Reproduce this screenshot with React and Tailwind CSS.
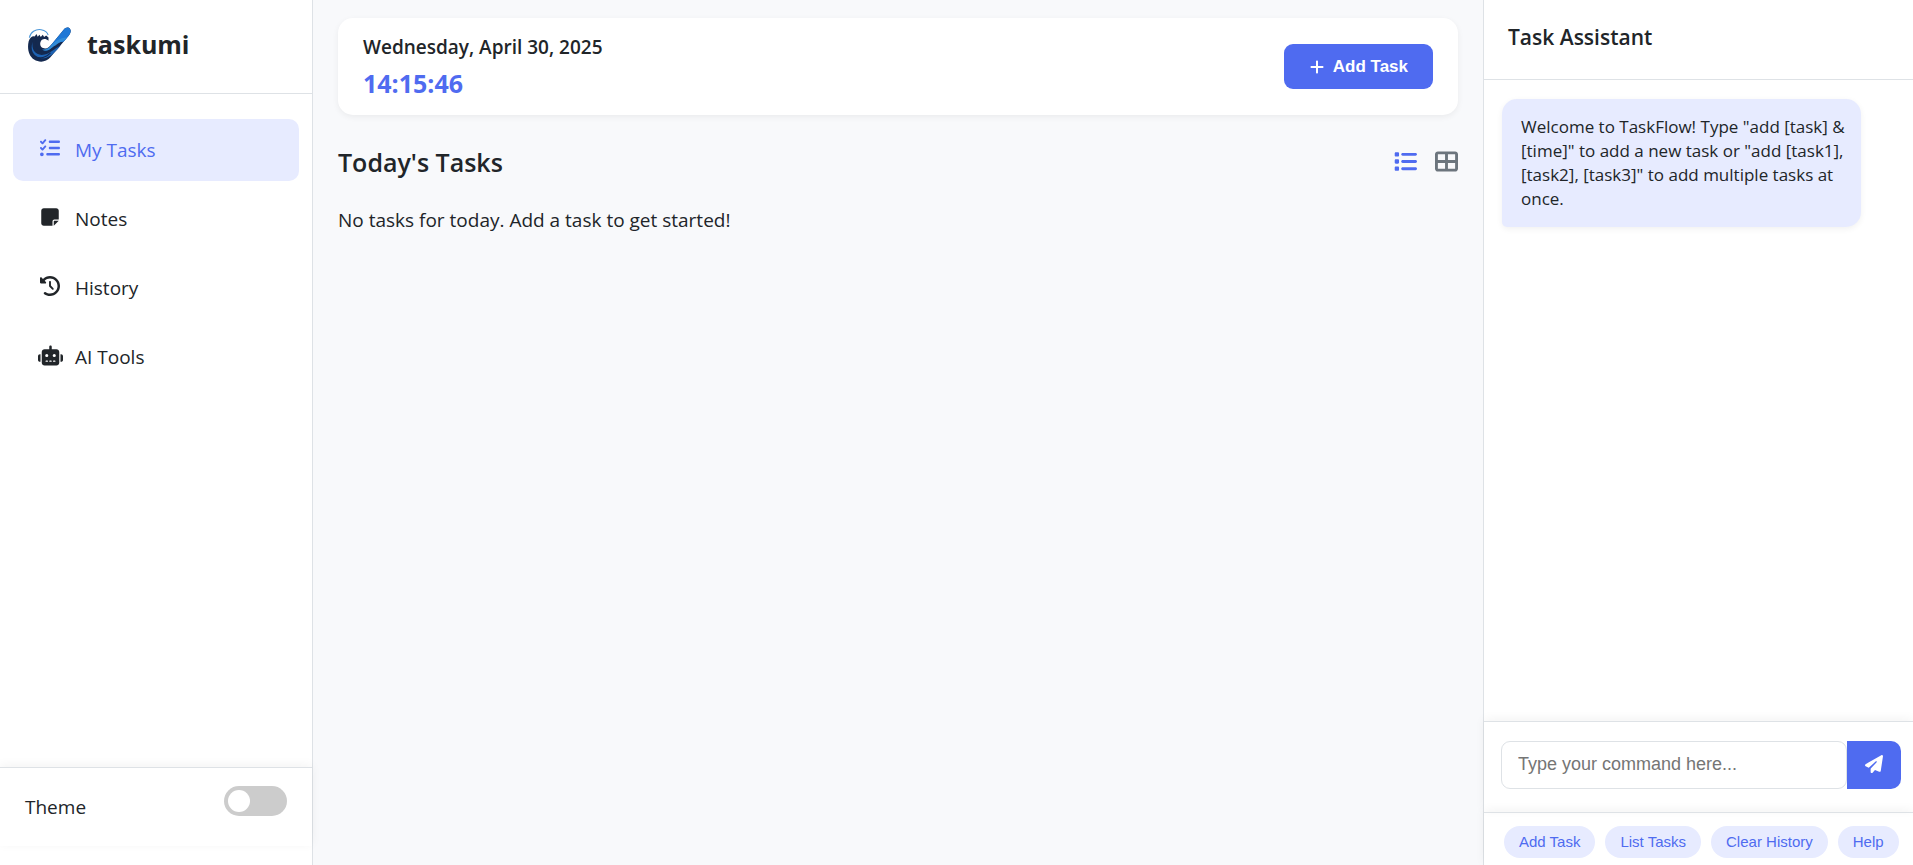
import { FaListCheck, FaNoteSticky, FaClockRotateLeft, FaRobot, FaPlus, FaList, FaTableCellsLarge, FaPaperPlane } from "react-icons/fa6";

const navItems = [
  { label: "My Tasks", Icon: FaListCheck, active: true },
  { label: "Notes", Icon: FaNoteSticky },
  { label: "History", Icon: FaClockRotateLeft },
  { label: "AI Tools", Icon: FaRobot },
];

const quickCommands = ["Add Task", "List Tasks", "Clear History", "Help"];

function Logo() {
  return (
    <svg viewBox="84 78 128 104" className="h-[35px] w-[43px] shrink-0" aria-hidden="true">
      <path d="M88 110 C91 92 107 84 123 86 C134 88 142 94 144 102" fill="none" stroke="#4a96d8" strokeWidth="3" />
      <path
        d="M86 120 C90 109 97 104 104 106 L109 99 L113 107 L118 101 L122 108 L128 101 L132 108 L138 103 L145 109 L145 119 C136 110 124 113 121 123 C118 134 125 142 135 142 C143 142 150 135 157 126 L190 86 C196 78 206 77 210 85 C213 92 209 99 205 104 L150 169 C138 183 118 185 102 175 C86 164 81 142 86 120 Z"
        fill="#14294f"
      />
      <path d="M146 140 L190 86 C196 78 206 77 210 85 C213 92 209 99 205 104 L190 122 C174 123 158 130 146 140 Z" fill="#1f78d6" />
      <path d="M200 109 C178 110 163 121 151 135 C144 142 135 146 126 144 C134 152 147 149 157 140 C168 129 180 121 194 117 Z" fill="#318cd8" />
      <path d="M98 122 C93 146 108 166 134 160 C150 156 162 143 182 132 L172 144 C158 160 142 172 124 171 C100 167 89 146 98 122 Z" fill="#1d62b2" />
      <path d="M109 119 C105 140 118 156 138 152 C148 149 156 142 164 135" fill="none" stroke="#14294f" strokeWidth="3" />
      <path d="M104 165 C120 174 138 168 151 155" fill="none" stroke="#14294f" strokeWidth="3" />
    </svg>
  );
}

function Sidebar() {
  return (
    <aside className="flex w-[313px] shrink-0 flex-col border-r border-[#dee2e6] bg-white">
      <div className="flex h-[94px] items-center gap-4 border-b border-[#dee2e6] pb-1 pl-7">
        <Logo />
        <span className="text-[25px] font-bold">taskumi</span>
      </div>
      <nav className="flex flex-1 flex-col gap-[7px] px-[13px] pt-[25px]">
        {navItems.map(({ label, Icon, active }) => (
          <a
            key={label}
            href="#"
            className={
              active
                ? "flex h-[62px] items-center gap-3 rounded-[10px] bg-[#e7ebff] px-6 text-[#4f6bf0]"
                : "flex h-[62px] items-center gap-3 rounded-[10px] px-6"
            }
          >
            <span className="flex w-[26px] justify-center pb-1">
              <Icon className={label === "AI Tools" ? "size-[25px]" : "size-5"} />
            </span>
            <span>{label}</span>
          </a>
        ))}
      </nav>
      <div className="mb-[19px] flex h-[79px] items-start justify-between border-t border-[#dee2e6] px-[25px] pt-[18px] shadow-[0_-2px_10px_rgba(0,0,0,0.05)]">
        <label htmlFor="theme" className="pt-[7px]">Theme</label>
        <span className="relative flex h-[30px] w-[63px] items-center rounded-full bg-[#ccc] px-1">
          <span className="size-[22px] rounded-full bg-white" />
          <input id="theme" type="checkbox" role="switch" className="absolute inset-0 size-full cursor-pointer opacity-0" />
        </span>
      </div>
    </aside>
  );
}

function TaskBoard() {
  return (
    <main className="min-w-0 flex-1 px-[25px] pt-[18px]">
      <header className="flex h-[97px] items-center justify-between rounded-[15px] bg-white px-[25px] shadow-[0_2px_6px_rgba(0,0,0,0.06)]">
        <div className="pt-px">
          <div className="text-[19px] font-semibold leading-8">Wednesday, April 30, 2025</div>
          <div className="text-[25px] font-bold leading-10 text-[#4f6bf0]">14:15:46</div>
        </div>
        <button className="flex h-[45px] items-center gap-2 rounded-[9px] bg-[#4f6bf0] px-[25px] font-['Liberation_Sans',Arial,sans-serif] text-[17px] font-bold text-white">
          <FaPlus className="size-4" />
          Add Task
        </button>
      </header>
      <div className="mt-[27px] flex items-center justify-between">
        <h1 className="text-[25px] font-semibold leading-10">Today's Tasks</h1>
        <div className="flex gap-[18px] pb-[2px]">
          <button aria-label="List view" className="text-[#4f6bf0]"><FaList className="size-[23px]" /></button>
          <button aria-label="Grid view" className="text-[#6c757d]"><FaTableCellsLarge className="size-[23px]" /></button>
        </div>
      </div>
      <p className="mt-[22px] leading-8">No tasks for today. Add a task to get started!</p>
    </main>
  );
}

function Assistant() {
  return (
    <aside className="flex w-[430px] shrink-0 flex-col border-l border-[#dee2e6] bg-white">
      <h2 className="h-20 border-b border-[#dee2e6] pl-6 pt-[21px] text-[21px] font-semibold leading-8">Task Assistant</h2>
      <div className="flex-1 px-[18px] pt-[19px]">
        <div className="w-[359px] rounded-[15px] rounded-bl-[5px] bg-[#e7ebff] py-4 pl-[19px] pr-3 text-[17px] leading-[24px] shadow-[0_2px_6px_rgba(0,0,0,0.06)]">
          Welcome to TaskFlow! Type "add [task] &amp; [time]" to add a new task or "add [task1], [task2], [task3]" to add multiple tasks at once.
        </div>
      </div>
      <form
        className="flex h-[91px] border-t border-[#dee2e6] pl-[17px] pr-3 pt-[19px] shadow-[0_-2px_10px_rgba(0,0,0,0.05)]"
        onSubmit={(e) => e.preventDefault()}
      >
        <input
          type="text"
          aria-label="Command"
          placeholder="Type your command here..."
          className="h-12 min-w-0 flex-1 rounded-[9px] border border-[#dee2e6] px-4 pb-[2px] font-['Liberation_Sans',Arial,sans-serif] text-lg outline-none placeholder:text-[#757575]"
        />
        <button aria-label="Send" className="flex h-12 w-[54px] items-center justify-center rounded-r-[10px] bg-[#4f6bf0] pb-[2px] text-white">
          <FaPaperPlane className="size-[18px]" />
        </button>
      </form>
      <div className="flex h-[53px] gap-[10px] border-t border-[#dee2e6] pl-5 pt-[13px] font-['Liberation_Sans',Arial,sans-serif] text-[15px] text-[#4f6bf0] shadow-[0_-2px_10px_rgba(0,0,0,0.05)]">
        {quickCommands.map((c) => (
          <button key={c} className="h-8 rounded-full bg-[#e7ebff] px-[15px]">{c}</button>
        ))}
      </div>
    </aside>
  );
}

export default function App() {
  return (
    <div className="flex h-screen overflow-hidden bg-[#f8f9fb] font-['Open_Sans','Noto_Sans',sans-serif] text-[19px] text-[#212529]">
      <Sidebar />
      <TaskBoard />
      <Assistant />
    </div>
  );
}
